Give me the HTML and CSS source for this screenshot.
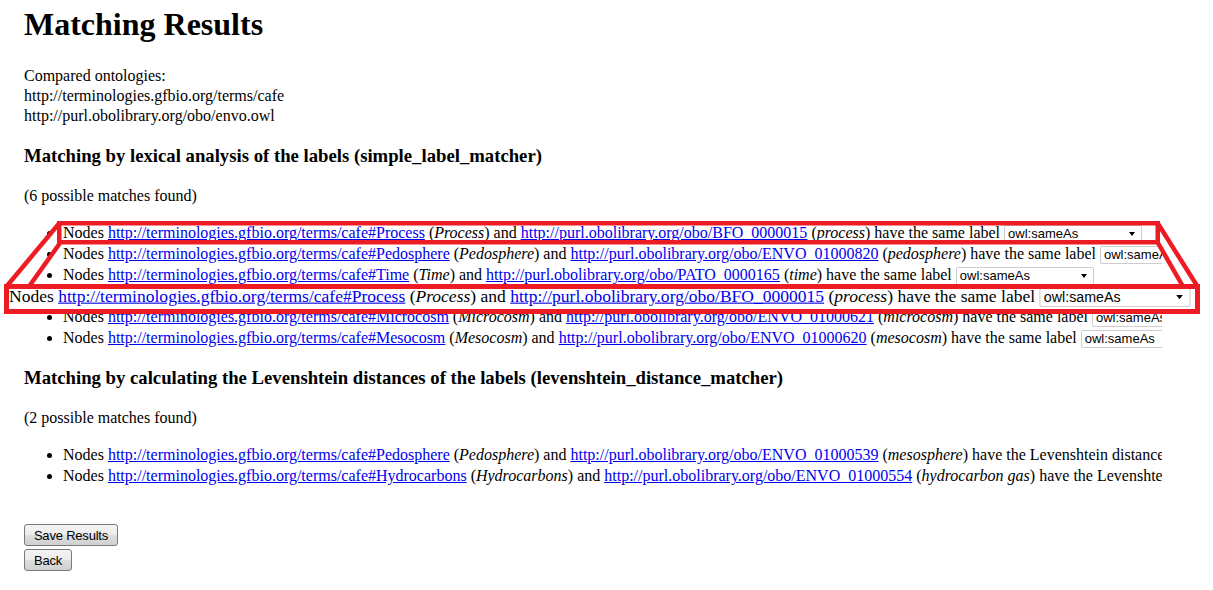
FILE: index.html
```html
<!DOCTYPE html>
<html>
<head>
<meta charset="utf-8">
<title>Matching Results</title>
<link rel="stylesheet" href="styles.css">
</head>
<body>
<div class="page">
  <h1 class="title">Matching Results</h1>
  <p class="compared">Compared ontologies:<br>http://terminologies.gfbio.org/terms/cafe<br>http://purl.obolibrary.org/obo/envo.owl</p>

  <h3 class="section">Matching by lexical analysis of the labels (simple_label_matcher)</h3>
  <p class="count">(6 possible matches found)</p>
  <ul class="matches">
    <li>Nodes <a href="#">http://terminologies.gfbio.org/terms/cafe#Process</a> (<i>Process</i>) and <a href="#">http://purl.obolibrary.org/obo/BFO_0000015</a> (<i>process</i>) have the same label <span class="sel">owl:sameAs</span></li>
    <li>Nodes <a href="#">http://terminologies.gfbio.org/terms/cafe#Pedosphere</a> (<i>Pedosphere</i>) and <a href="#">http://purl.obolibrary.org/obo/ENVO_01000820</a> (<i>pedosphere</i>) have the same label <span class="sel">owl:sameAs</span></li>
    <li>Nodes <a href="#">http://terminologies.gfbio.org/terms/cafe#Time</a> (<i>Time</i>) and <a href="#">http://purl.obolibrary.org/obo/PATO_0000165</a> (<i>time</i>) have the same label <span class="sel">owl:sameAs</span></li>
    <li>Nodes <a href="#">http://terminologies.gfbio.org/terms/cafe#Biome</a> (<i>Biome</i>) and <a href="#">http://purl.obolibrary.org/obo/ENVO_00000428</a> (<i>biome</i>) have the same label <span class="sel">owl:sameAs</span></li>
    <li>Nodes <a href="#">http://terminologies.gfbio.org/terms/cafe#Microcosm</a> (<i>Microcosm</i>) and <a href="#">http://purl.obolibrary.org/obo/ENVO_01000621</a> (<i>microcosm</i>) have the same label <span class="sel">owl:sameAs</span></li>
    <li>Nodes <a href="#">http://terminologies.gfbio.org/terms/cafe#Mesocosm</a> (<i>Mesocosm</i>) and <a href="#">http://purl.obolibrary.org/obo/ENVO_01000620</a> (<i>mesocosm</i>) have the same label <span class="sel">owl:sameAs</span></li>
  </ul>

  <h3 class="section">Matching by calculating the Levenshtein distances of the labels (levenshtein_distance_matcher)</h3>
  <p class="count">(2 possible matches found)</p>
  <ul class="matches">
    <li>Nodes <a href="#">http://terminologies.gfbio.org/terms/cafe#Pedosphere</a> (<i>Pedosphere</i>) and <a href="#">http://purl.obolibrary.org/obo/ENVO_01000539</a> (<i>mesosphere</i>) have the Levenshtein distance 2 <span class="sel">owl:sameAs</span></li>
    <li>Nodes <a href="#">http://terminologies.gfbio.org/terms/cafe#Hydrocarbons</a> (<i>Hydrocarbons</i>) and <a href="#">http://purl.obolibrary.org/obo/ENVO_01000554</a> (<i>hydrocarbon gas</i>) have the Levenshtein distance 4 <span class="sel">owl:sameAs</span></li>
  </ul>

  <div class="actions">
    <button class="btn btn-save">Save Results</button>
    <button class="btn btn-back">Back</button>
  </div>
</div>

<svg class="callout-lines" width="1213" height="590" viewBox="0 0 1213 590">
  <rect x="59.25" y="223.25" width="1098.5" height="19" fill="none" stroke="#ed1c24" stroke-width="4.5"/>
  <line x1="59.25" y1="223.25" x2="6.5" y2="286.5" stroke="#ed1c24" stroke-width="4.5"/>
  <line x1="60" y1="243" x2="29" y2="286.5" stroke="#ed1c24" stroke-width="4.5"/>
  <line x1="1157.75" y1="223.25" x2="1197.5" y2="286.5" stroke="#ed1c24" stroke-width="4.5"/>
  <line x1="1158" y1="243" x2="1183" y2="286.5" stroke="#ed1c24" stroke-width="4.5"/>
</svg>

<div class="zoom-box">
  <div class="zoom-row">Nodes <a href="#">http://terminologies.gfbio.org/terms/cafe#Process</a> (<i>Process</i>) and <a href="#">http://purl.obolibrary.org/obo/BFO_0000015</a> (<i>process</i>) have the same label <span class="sel">owl:sameAs</span></div>
</div>
</body>
</html>
```

FILE: styles.css
```css
html, body {
  margin: 0;
  padding: 0;
}

body {
  position: relative;
  height: 590px;
  overflow: hidden;
  background: #ffffff;
  color: #000000;
  font-family: "Liberation Serif", "Times New Roman", serif;
  font-size: 16px;
}

.page {
  width: 1138px;
  margin-left: 24px;
  overflow: hidden;
}

.title {
  margin: 6px 0 0;
  font-size: 32px;
  line-height: 37px;
  font-weight: bold;
}

.compared {
  margin: 23px 0 0;
  line-height: 20px;
}

.section {
  margin: 18.5px 0 0;
  font-size: 18.72px;
  line-height: 22px;
  font-weight: bold;
  white-space: nowrap;
}

.count {
  margin: 19px 0 0;
  line-height: 20px;
}

.matches {
  margin: 16.5px 0 0;
  padding-left: 39px;
  line-height: 21px;
  white-space: nowrap;
}

a {
  color: #0000ee;
  text-decoration: underline;
}

.sel {
  display: inline-block;
  position: relative;
  vertical-align: baseline;
  box-sizing: border-box;
  width: 138px;
  height: 18px;
  padding: 0 0 0 3px;
  border: 1px solid #cdcdcd;
  border-radius: 2px;
  background: #ffffff;
  color: #000000;
  font-family: "Liberation Sans", Arial, sans-serif;
  font-size: 13px;
  line-height: 16px;
}

.sel::after {
  content: "";
  position: absolute;
  right: 6px;
  top: 6px;
  border-left: 3.5px solid transparent;
  border-right: 3.5px solid transparent;
  border-top: 4px solid #000;
}

.actions {
  margin-top: 38px;
  display: flex;
  flex-direction: column;
  align-items: flex-start;
  gap: 3px;
}

.btn {
  -webkit-appearance: none;
  appearance: none;
  box-sizing: border-box;
  height: 22px;
  margin: 0;
  padding: 0;
  border: 1px solid #7a7a7a;
  border-radius: 3px;
  background: linear-gradient(#f4f4f4 0%, #ececec 48%, #dedede 52%, #d0d0d0 100%);
  color: #000000;
  font: 13px "Liberation Sans", Arial, sans-serif;
  letter-spacing: -0.2px;
  text-align: center;
}

.btn-save {
  width: 94px;
}

.btn-back {
  width: 48px;
}

.callout-lines {
  position: absolute;
  left: 0;
  top: 0;
  pointer-events: none;
}

.zoom-box {
  position: absolute;
  left: 4px;
  top: 284px;
  box-sizing: border-box;
  width: 1196px;
  height: 30px;
  border: 5px solid #ed1c24;
  background: #ffffff;
  overflow: hidden;
}

.zoom-row {
  margin-top: -5px;
  line-height: 21px;
  white-space: nowrap;
  transform: scale(1.095);
  transform-origin: 0 0;
}
```
